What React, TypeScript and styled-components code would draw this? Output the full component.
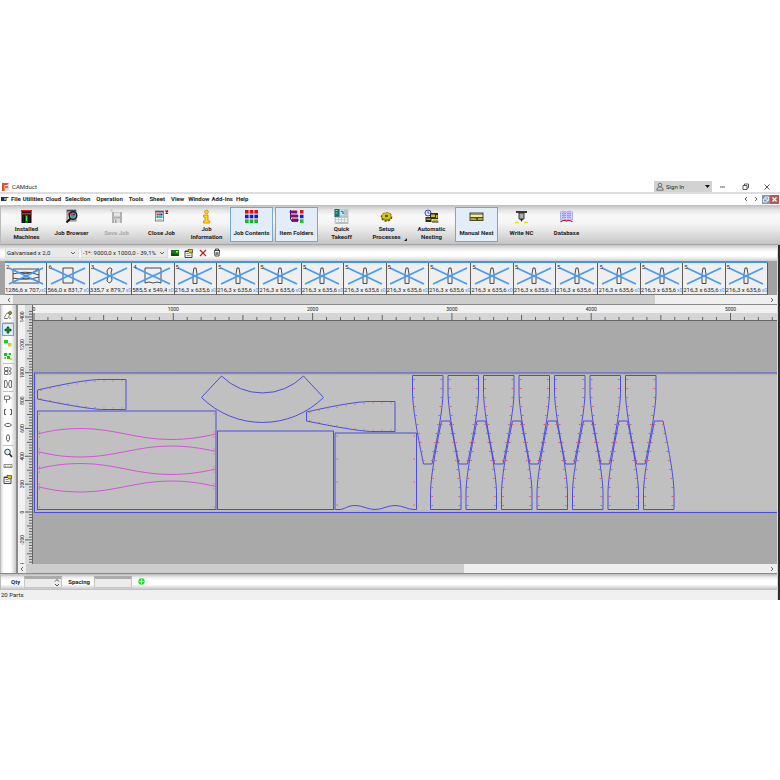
import React from "react";
import styled, { createGlobalStyle } from "styled-components";

const ink = "#262626";
const blue = "#4c4ce0";

const GlobalStyle = createGlobalStyle`
  * { box-sizing: border-box; }
  body { margin: 0; background: #fff; }
  button, select, input { font: inherit; color: inherit; margin: 0; }
  svg { display: block; flex: none; }
`;

const Page = styled.div`
  min-height: 100vh;
  display: flex;
  flex-direction: column;
  justify-content: center;
  background: #fff;
  color: ${ink};
  font-family: Roboto, "Open Sans", sans-serif;
  font-size: 6px;
  line-height: 8px;
`;

const Window = styled.div`
  display: flex;
  flex-direction: column;
`;

const TitleBar = styled.header`
  height: 12px;
  display: flex;
  align-items: center;
  padding: 1px 8px 0 2px;
  gap: 3px;
`;

const Title = styled.h1`
  margin: 0;
  flex: 1;
  font-size: 6px;
  font-weight: 400;
  line-height: 10px;
`;

const SignIn = styled.button`
  width: 58px;
  height: 11px;
  display: flex;
  align-items: center;
  gap: 2px;
  padding: 0 2px;
  border: 0;
  background: #d2d2d2;
`;

const Grow = styled.span`
  flex: 1;
  text-align: left;
`;

const WindowButtons = styled.div`
  display: flex;
  margin-left: 3px;
  gap: 12px;
`;

const BareButton = styled.button<{ $w?: number }>`
  width: ${(p) => p.$w ?? 10}px;
  height: 10px;
  padding: 0;
  border: 0;
  background: none;
  display: flex;
  align-items: center;
  justify-content: center;
`;

const MenuBar = styled.nav`
  height: 13px;
  display: flex;
  align-items: center;
  border-top: 2px solid #dedede;
  padding: 0 1px 1px;
  font-weight: 700;
  color: #222;
`;

const MenuButton = styled.button<{ $gap: number }>`
  padding: 0;
  border: 0;
  background: none;
  line-height: 10px;
  margin-left: ${(p) => p.$gap}px;
  white-space: nowrap;
`;

const MenuTools = styled.div`
  display: flex;
  margin-left: auto;
  align-items: center;
`;

const ToolBar = styled.div`
  height: 40px;
  display: flex;
  align-items: center;
  gap: 2px;
  padding-left: 4px;
  border-left: 1px solid #bbb;
  border-bottom: 1px solid #a6a6a6;
  background: linear-gradient(#bdbdbd, #e2e2e2 12%, #f8f8f8 25%, #f6f6f6 45%, #e2e2e2 70%, #c4c4c4);
`;

const ToolButton = styled.button<{ $on?: boolean; $off?: boolean }>`
  width: 43px;
  height: 35px;
  padding: 1px 0 0;
  display: flex;
  flex-direction: column;
  align-items: center;
  border: 1px solid ${(p) => (p.$on ? "#78a6cc" : "transparent")};
  background: ${(p) => (p.$on ? "#e2edf8" : "none")};
  color: ${(p) => (p.$off ? "#a8a8a8" : "#1c1c1c")};
  font-weight: 700;
  position: relative;
`;

const ToolLabel = styled.span`
  flex: 1;
  display: flex;
  align-items: center;
  text-align: center;
  white-space: pre;
`;

const Corner = styled.svg`
  position: absolute;
  right: 0;
  bottom: 0;
`;

const Lower = styled.div`
  display: flex;
  border-right: 2px solid #2c2c2c;
`;

const LowerMain = styled.main`
  flex: 1;
  min-width: 0;
  display: flex;
  flex-direction: column;
  border-right: 1px solid #d8d8d8;
`;

const OptionBar = styled.div`
  height: 16px;
  display: flex;
  align-items: center;
  gap: 2px;
  padding: 0 5px 1px;
  background: linear-gradient(#c2c2c2, #efefef 25%, #fff 45%, #fff 70%, #cfcfcf);
`;

const Combo = styled.label<{ $w: number }>`
  width: ${(p) => p.$w}px;
  height: 11px;
  display: flex;
  align-items: center;
  background: #e9e9e9;
  border: 1px solid #dcdcdc;
  padding-right: 2px;
`;

const ComboSelect = styled.select`
  flex: 1;
  min-width: 0;
  height: 8px;
  padding: 0 0 0 1px;
  border: 0;
  background: none;
  appearance: none;
  line-height: 8px;
`;

const OptionIcons = styled.div`
  display: flex;
  gap: 4px;
`;

const Strip = styled.div`
  background: #a2a2a2;
  padding: 0 9px 0 5px;
`;

const StripGrid = styled.ul`
  list-style: none;
  margin: 0;
  padding: 0;
  display: grid;
  grid-template-columns: repeat(18, minmax(0, 1fr));
  border-top: 2px solid #3c94f4;
`;

const Thumb = styled.li`
  height: 32px;
  background: #efefef;
  border-right: 1px solid #5c5c5c;
  border-bottom: 1px solid #777;
  display: flex;
  flex-direction: column;
  align-items: center;
  position: relative;
`;

const ThumbCount = styled.span`
  position: absolute;
  left: 1px;
  top: 0;
`;

const ThumbSize = styled.span`
  display: flex;
  width: 100%;
  justify-content: space-between;
  white-space: nowrap;
`;

const SizeText = styled.span`
  min-width: 0;
  overflow: hidden;
`;

const Mult = styled.span`
  color: #3f98f6;
  font-size: 5px;
`;

const ScrollBar = styled.div<{ $h: number; $pad: number }>`
  height: ${(p) => p.$h}px;
  display: flex;
  align-items: center;
  gap: 1px;
  background: #efefef;
  padding: 0 2px 0 ${(p) => p.$pad}px;
`;

const ScrollTrack = styled.div`
  flex: 1;
  height: 100%;
`;

const ScrollThumb = styled.div<{ $size: number }>`
  width: ${(p) => p.$size}%;
  height: 100%;
  background: #cdcdcd;
`;

const Work = styled.div`
  display: flex;
  border-top: 1px solid #8a8a8a;
  border-bottom: 1px solid #8a8a8a;
`;

const SideBar = styled.div`
  width: 18px;
  display: flex;
  flex-direction: column;
  align-items: center;
  padding: 3px 2px 0 1px;
  border-left: 1px solid #bbb;
  border-right: 2px solid #8c8c8c;
  background: linear-gradient(90deg, #dcdcdc, #fff 20%, #fff 65%, #c8c8c8);
`;

const SideButton = styled.button<{ $on?: boolean }>`
  width: 12px;
  height: 13px;
  padding: 0;
  display: flex;
  align-items: center;
  justify-content: center;
  border: 1px solid ${(p) => (p.$on ? "#6fa3d2" : "transparent")};
  background: ${(p) => (p.$on ? "#dcebf8" : "none")};
`;

const SideRule = styled.div`
  width: 11px;
  height: 2px;
  border-bottom: 1px solid #c4c4c4;
`;

const Board = styled.div`
  flex: 1;
  min-width: 0;
  display: flex;
  flex-direction: column;
`;

const BoardMain = styled.div`
  display: flex;
  min-width: 0;
`;

const RulerSvg = styled.svg`
  font-size: 5px;
`;

const PlanColumn = styled.div`
  flex: 1;
  min-width: 0;
  overflow: hidden;
`;

const BottomBar = styled.form`
  height: 16px;
  display: flex;
  align-items: center;
  padding: 0 0 1px 10px;
  font-weight: 700;
  border-left: 1px solid #bbb;
  background: linear-gradient(#b8b8b8, #ececec 20%, #fff 40%, #fff 65%, #bcbcbc);
`;

const FieldLabel = styled.label`
  display: flex;
  align-items: center;
  gap: 4px;
  margin-right: 6px;
`;

const Field = styled.span`
  display: flex;
  align-items: center;
  width: 38px;
  height: 12px;
  border: 1px solid #c6c6c6;
  border-top: 3px solid #acacac;
  background: #ececec;
`;

const FieldInput = styled.input`
  flex: 1;
  min-width: 0;
  height: 8px;
  padding: 0;
  border: 0;
  background: none;
`;

const Status = styled.footer`
  height: 10px;
  padding-left: 1px;
  background: #f0f0f0;
  line-height: 10px;
`;

const Chevron = ({ dir }: { dir: "down" | "left" | "right" }) => {
  const d = { down: "M1 2l2 2 2-2", left: "M4 1L2 3l2 2", right: "M2 1l2 2-2 2" }[dir];
  return (
    <svg width="6" height="6" aria-hidden="true">
      <path d={d} fill="none" stroke="#555" strokeWidth=".9" />
    </svg>
  );
};

const iconBox = { width: 15, height: 15, viewBox: "0 0 15 15", "aria-hidden": true } as const;

const MachinesIcon = () => (
  <svg {...iconBox}>
    <rect x="2.500" y="1" width="10" height="13" fill="#111" />
    <rect x="2" y="1" width="11" height="1.500" fill="#d01818" />
    <rect x="2" y="4" width="11" height="1.500" fill="#e02020" />
    <rect x="6" y="6" width="3" height="8" fill="#0a6b16" />
    <rect x="7" y="7" width="1.200" height="5" fill="#35f045" />
    <path d="M4.500 7v6M10.500 7v6" stroke="#5a1010" strokeWidth=".8" />
  </svg>
);

const BrowserIcon = () => (
  <svg {...iconBox}>
    <rect x="3" y="1" width="9" height="11" fill="#d0d0d8" stroke="#555" strokeWidth=".7" />
    <rect x="3" y="1" width="9" height="1.500" fill="#445" />
    <path d="M4 3.500h2v2H4z" fill="#d33" />
    <circle cx="9" cy="6.500" r="3.800" fill="#7ea6b4" stroke="#16161c" strokeWidth="1.400" />
    <path d="M7 4.500h2v2H7z" fill="#c02a60" />
    <path d="M9 4.500h2v2H9z" fill="#2343cc" />
    <path d="M7.500 7h3v1.500h-3z" fill="#29b04a" />
    <path d="M6.500 9.500L2.500 13.500" stroke="#111" strokeWidth="2" />
  </svg>
);

const SaveIcon = () => (
  <svg {...iconBox}>
    <path d="M3 3h10v11H3z" fill="#b0b0b0" />
    <path d="M5 3.500h6v4H5z" fill="#e4e4e4" />
    <path d="M5 9.500h6V14H5z" fill="#dcdcdc" />
    <path d="M6 10.500h1.500V14H6z" fill="#a4a4a4" />
    <path d="M1 1.500h3M2.500 0v3" stroke="#c4c4c4" strokeWidth=".7" />
  </svg>
);

const CloseJobIcon = () => (
  <svg {...iconBox}>
    <rect x="1.500" y="2" width="8" height="10" fill="#f4f4f4" stroke="#6a6a72" strokeWidth=".8" />
    <rect x="1.500" y="2" width="8" height="1.500" fill="#556" />
    <path d="M2.500 4.500h2v2h-2z" fill="#d22" />
    <path d="M4.500 4.500h2v2h-2z" fill="#a2c" />
    <path d="M6.500 4.500h2v2h-2z" fill="#22b" />
    <path d="M2.500 7h2v2h-2z" fill="#2a4" />
    <path d="M4.500 7h4v2h-4z" fill="#2ac0a0" />
    <path d="M3 10.500h5" stroke="#999" strokeWidth=".6" />
    <path d="M11.500 1.500l2.500 3M14 1.500l-2.500 3" stroke="#8c1414" strokeWidth="1.200" />
  </svg>
);

const InfoIcon = () => (
  <svg {...iconBox}>
    <circle cx="7.500" cy="3" r="1.800" fill="#ffe100" stroke="#e07a10" strokeWidth=".8" />
    <path d="M4.500 6H9v6h1.800v2H4.500v-2H6V8H4.500z" fill="#ffe100" stroke="#e07a10" strokeWidth=".8" />
  </svg>
);

const ContentsIcon = () => (
  <svg {...iconBox}>
    {["#d81212", "#1818c8", "#14b81c"].map((fill, r) =>
      [0, 1, 2].map((c) => <rect key={`${r}${c}`} x={1 + c * 4.7} y={1 + r * 4.7} width="3.600" height="3.600" fill={fill} />)
    )}
  </svg>
);

const FoldersIcon = () => (
  <svg {...iconBox}>
    <path d="M1 1.500h7v3H1zM2 5.500h7v3H2zM3 9.500h6v3.500H3z" fill="#b01050" />
    <path d="M.5 3h8M1 7h8.500M2 11h8" stroke="#3216a0" strokeWidth="1.200" />
    <path d="M1.500 1v9l2 3" stroke="#501880" fill="none" />
    <rect x="11" y="1" width="3.500" height="3.500" fill="#e01414" />
    <rect x="11" y="5.700" width="3.500" height="3.500" fill="#1c1cd0" />
    <rect x="11" y="10.400" width="3.500" height="3.500" fill="#16c01e" />
  </svg>
);

const TakeoffIcon = () => (
  <svg {...iconBox}>
    <path d="M0.500 0h14v15h-14z" fill="#c6cccc" />
    <path d="M0.500 0h5v8h-5z" fill="#1d6a70" />
    <path d="M1.500 1.500h2M1.500 4h2" stroke="#7fe0b0" />
    <path d="M6 1h4v5H6z" fill="#bfe6fa" />
    <path d="M7 2l2 1v2" stroke="#1474e0" strokeWidth="1.300" fill="none" />
    <path d="M11 1v5M13 1v5" stroke="#9aa" strokeWidth=".7" />
    <path d="M2 9.500h12M2 12h12" stroke="#fff" strokeWidth="1.400" strokeDasharray="2 1" />
    <path d="M2 8h12M2 14h12" stroke="#98a4a4" strokeWidth=".6" />
  </svg>
);

const GearIcon = () => (
  <svg {...iconBox}>
    <ellipse cx="7.500" cy="8" rx="5" ry="4" fill="#a99a14" stroke="#5a5008" strokeWidth="1.600" strokeDasharray="2 1.400" />
    <ellipse cx="7.500" cy="7" rx="4.500" ry="3.200" fill="#d8c81e" stroke="#8a7e10" strokeWidth=".5" />
    <ellipse cx="7.500" cy="7" rx="1.600" ry="1.200" fill="#5d540a" />
  </svg>
);

const NestIcon = () => (
  <svg {...iconBox}>
    <circle cx="4" cy="4" r="3" fill="#dfe4ff" stroke="#3a44b8" strokeWidth="1" />
    <path d="M4 2v2h1.500" stroke="#2b36a8" strokeWidth=".7" fill="none" />
    <path d="M6 4h8v6H6z" fill="#35310f" />
    <path d="M7 5.500h4v2.500H7zM12 6h1.500v3H12z" fill="#cbbd2c" />
    <path d="M1.500 8h6v5h-6z" fill="#2b280e" />
    <path d="M2.500 9.500h4V11h-4zM8.500 10.500H14v2H8.500z" fill="#b9aa20" />
    <path d="M8 13h6.500" stroke="#222" />
  </svg>
);

const ManualIcon = () => (
  <svg {...iconBox}>
    <path d="M.5 3.500h14v8.500H.5z" fill="#4a4836" />
    <path d="M1.500 5.500h12V8h-12z" fill="#f0eca8" />
    <path d="M1.500 9h5l1.500 2h-6.500zM9 9h4.500v2H9z" fill="#b3a52a" />
    <path d="M2 4.500h11" stroke="#99a" strokeWidth=".7" />
  </svg>
);

const WriteIcon = () => (
  <svg {...iconBox}>
    <path d="M2 2h11v2H2z" fill="#38383e" />
    <path d="M5 4h5v6H5z" fill="#aaaab0" stroke="#26262a" strokeWidth=".9" />
    <path d="M6 10h3l-1.500 3z" fill="#222" />
    <path d="M1 13.500h4M10 13.500h4" stroke="#e6dc14" strokeWidth="1.600" />
  </svg>
);

const DatabaseIcon = () => (
  <svg {...iconBox}>
    <path d="M1.500 3q3-2 6 0q3-2 6 0v8q-3-2-6 0q-3-2-6 0z" fill="#d4d2ff" stroke="#9a94ee" strokeWidth=".7" />
    <path d="M3 4.500q2-1 4 0M3 6.500q2-1 4 0M3 8.500q2-1 4 0M8 4.500q2-1 4 0M8 6.500q2-1 4 0M8 8.500q2-1 4 0" stroke="#7a72f0" strokeWidth=".8" fill="none" />
    <path d="M1.500 13q3-2.500 6-1q3-1.500 6 1" stroke="#a02a36" strokeWidth="1.200" fill="none" />
  </svg>
);

const tools: { label: string; icon: React.ReactNode; on?: boolean; off?: boolean; more?: boolean }[] = [
  { label: "Installed\nMachines", icon: <MachinesIcon /> },
  { label: "Job Browser", icon: <BrowserIcon /> },
  { label: "Save Job", icon: <SaveIcon />, off: true },
  { label: "Close Job", icon: <CloseJobIcon /> },
  { label: "Job\nInformation", icon: <InfoIcon /> },
  { label: "Job Contents", icon: <ContentsIcon />, on: true },
  { label: "Item Folders", icon: <FoldersIcon />, on: true },
  { label: "Quick\nTakeoff", icon: <TakeoffIcon /> },
  { label: "Setup\nProcesses", icon: <GearIcon />, more: true },
  { label: "Automatic\nNesting", icon: <NestIcon /> },
  { label: "Manual Nest", icon: <ManualIcon />, on: true },
  { label: "Write NC", icon: <WriteIcon /> },
  { label: "Database", icon: <DatabaseIcon /> },
];

const menus: [string, number][] = [
  ["File", 2], ["Utilities", 2], ["Cloud", 2], ["Selection", 4], ["Operation", 6], ["Tools", 6],
  ["Sheet", 6], ["View", 6], ["Window", 4], ["Add-Ins", 2], ["Help", 3],
];

const Properties = () => (
  <svg width="10" height="10" viewBox="0 0 10 10" aria-hidden="true">
    <path d="M1 3h7v6.500H1z" fill="#f6f6f6" stroke="#333" strokeWidth=".9" />
    <path d="M1 3.500h7" stroke="#333" strokeWidth="1" />
    <path d="M2.500 5.500h3M2.500 7.500h4" stroke="#666" strokeWidth=".7" />
    <path d="M4 1.500h4.500v3L6 5 4.500 3.500z" fill="#d6c81e" stroke="#4a440c" strokeWidth=".7" />
  </svg>
);

const sideIcons: { name: string; art: React.ReactNode; on?: boolean; rule?: boolean }[] = [
  {
    name: "Edit part", rule: true,
    art: <><path d="M1 8l3-5 3 1-2 4M1 8.500h4" fill="none" stroke="#777" strokeWidth=".9" /><path d="M5 2.500L7.500 1 9 3 7 5z" fill="#9c8a18" stroke="#333" strokeWidth=".5" /><path d="M6 8h2" stroke="#777" /></>,
  },
  {
    name: "Move part", on: true,
    art: <><path d="M5 2v6M2 5h6" stroke="#0c6a20" strokeWidth="1.400" /><path d="M5 1l2 2.500H3zM5 9l2-2.500H3zM1 5l2.500-2v4zM9 5L6.500 3v4z" fill="#0a5a1a" /></>,
  },
  { name: "Copy part", art: <><path d="M1 2h4v3.500H1z" fill="#12d41e" /><path d="M5 5h3.500v3.500H5z" fill="#d9d013" /></> },
  {
    name: "Array parts", rule: true,
    art: <><path d="M1 2h3v3H1zM4 5h3v3H4zM6 2h2v2H6z" fill="#12c81e" /><path d="M7 7h2v2H7z" fill="#d9d013" /><path d="M1 7h2M4.500 3h1" stroke="#0a7a14" /></>,
  },
  { name: "Flip vertical", art: <path d="M1.500 1.500h3.500v3H1.500zM1.500 5.500h3.500v3H1.500zM6 1.500q3 0 2 2.500L6 5l2 1q1 2.500-2 2.500" fill="none" stroke="#666" strokeWidth=".9" /> },
  { name: "Flip horizontal", rule: true, art: <path d="M1.500 1.500h2l1 3.500-1 3.500h-2zM8.500 1.500h-2l-1 3.500 1 3.500h2z" fill="none" stroke="#666" strokeWidth=".9" /> },
  { name: "Pin part", art: <path d="M1.500 2h5v3.500h-5zM6.500 4h2M3.500 5.500V9" fill="none" stroke="#666" strokeWidth=".9" /> },
  { name: "Select region", art: <path d="M3 2.500H1.500v5H3M7 2.500h1.500v5H7" fill="none" stroke="#555" strokeWidth="1" /> },
  { name: "Stretch width", art: <><rect x="2.500" y="3.500" width="5" height="3" rx="1" fill="none" stroke="#666" /><path d="M1 5h1M8 5h1" stroke="#666" /></> },
  { name: "Stretch height", rule: true, art: <><rect x="3.500" y="2.500" width="3" height="5" rx="1" fill="none" stroke="#666" /><path d="M5 1v1.500M5 7.500V9" stroke="#666" /></> },
  { name: "Zoom", art: <><circle cx="4.500" cy="4" r="2.800" fill="#dff3f3" stroke="#2a4048" strokeWidth="1" /><path d="M6.500 6L9 9" stroke="#223" strokeWidth="1.500" /></> },
  { name: "Measure", art: <><path d="M1 3.500h8v3H1z" fill="#e8e8e8" stroke="#777" strokeWidth=".8" /><path d="M2.500 5v1.500M5 5v1.500M7.500 5v1.500" stroke="#666" strokeWidth=".6" /></> },
];

const shapes = {
  sheet: "M6 3h26v14H6zM6 4Q19 12 32 3M6 8Q19 4 32 9M6 12Q19 15 32 11M6 16Q19 8 32 16",
  square: "M14 2h10v15H14z",
  bend: "M16 5q2-5 5-2l-1 4 1 7q-2 5-5 1l1-5z",
  wave: "M11 2h16v15q-4-2-8 0-4-2-8 0z",
  cone: "M17 17.500V8l1-6h2l1 6v9.500z",
};

const thumbs: [string, string, keyof typeof shapes][] = [
  ["2", "1286,6 x 707,4", "sheet"],
  ["6", "566,0 x 831,7", "square"],
  ["3", "335,7 x 879,7", "bend"],
  ["4", "585,5 x 549,4", "wave"],
  ...Array.from({ length: 14 }, () => ["5", "216,3 x 635,6", "cone"] as [string, string, keyof typeof shapes]),
];

const SCALE = 0.1393;
const ORIGIN_X = 1;
const ORIGIN_Y = 191;
const range = (a: number, b: number, step: number) => Array.from({ length: Math.floor((b - a) / step) + 1 }, (_, i) => a + i * step);

const TopRuler = () => (
  <RulerSvg width="100%" height="16" aria-label="Horizontal ruler">
    <rect width="100%" height="8" fill="#f1f1f1" />
    <rect y="8" width="100%" height="7" fill="#d5d5d5" />
    <path d="M0 15.500H4000" stroke="#666" />
    {range(0, 20000, 100).map((mm) => {
      const x = ORIGIN_X + mm * SCALE;
      return <path key={mm} d={`M${x} 15V${mm % 1000 === 0 ? 8 : mm % 500 === 0 ? 10 : 12}`} stroke="#555" strokeWidth=".9" />;
    })}
    {range(0, 5000, 1000).map((mm) => (
      <text key={mm} x={ORIGIN_X + mm * SCALE} y="6" textAnchor="middle" fill="#222">{mm}</text>
    ))}
  </RulerSvg>
);

const SideRuler = () => (
  <RulerSvg width="15" height="259" aria-label="Vertical ruler">
    <rect width="7" height="259" fill="#f1f1f1" />
    <rect x="7" width="7" height="259" fill="#d9d9d9" />
    <path d="M14.500 0V259" stroke="#666" />
    {range(-360, 1440, 20).map((mm) => {
      const y = 16 + ORIGIN_Y - mm * SCALE;
      return <path key={mm} d={`M14 ${y}H${mm % 200 === 0 ? 7 : mm % 100 === 0 ? 9 : 11}`} stroke="#555" strokeWidth=".9" />;
    })}
    {range(-400, 1400, 200).map((mm) => (
      <text key={mm} transform={`translate(6 ${16 + ORIGIN_Y - mm * SCALE}) rotate(-90)`} textAnchor="middle" fill="#222">{mm}</text>
    ))}
  </RulerSvg>
);

const Taper = ({ x, y }: { x: number; y: number }) => (
  <g transform={`translate(${x} ${y})`}>
    <path d="M0 10.500Q46 0 64 0H88.500V30H64Q46 29 0 19.500z" />
    <path d="M3 11h1M12 9h1M21 7.500h1M30 6h1M39 4.500h1M48 3h1M57 2h1M66 1.500h1M75 1.500h1M84 1.500h1M3 19h1M12 21h1M21 22.500h1M30 24h1M39 25.500h1M48 27h1M57 28h1M66 28.500h1M75 28.500h1M84 28.500h1" stroke="#e25b5b" />
  </g>
);

const coneMarks = (() => {
  const inset = [0, 0, 0, 1, 2, 3.5, 5, 6.5, 8, 9.5];
  return inset.map((v, i) => `M${v + 1} ${4 + i * 9}h1.500M${28 - v} ${4 + i * 9}h1.500`).join("");
})();

const Cone = ({ x, y, up }: { x: number; y: number; up?: boolean }) => (
  <g transform={`translate(${x} ${y}) ${up ? "scale(1 -1)" : ""}`}>
    <path d="M0 0H30.500V18Q30 38 19.500 88.500H11Q.5 38 0 18z" />
    <path d={coneMarks} stroke="#e25b5b" />
  </g>
);

const wave = (y: number, a: number, b: number) =>
  `M4.500 ${y}C20 ${y + a * 0.75} 34 ${y + a} 49 ${y + a}C80 ${y + a} 105 ${y + b} 137 ${y + b}C155 ${y + b} 168 ${y + b * 0.6} 183 ${y}`;

const Plan = () => (
  <svg width="100%" height="243" role="img" aria-label="Nested parts on sheet">
    <rect width="100%" height="243" fill="#a9a9a9" />
    <rect x="1.500" y="52" width="4000" height="139.500" fill="#c0c0c0" stroke={blue} />
    <rect x="3" y="53.500" width="4000" height="136.500" fill="none" stroke="#aaa98c" strokeWidth=".8" strokeDasharray="1.500 1" />
    <g fill="none" stroke={blue} strokeWidth="1">
      <Taper x={4.5} y={58.5} />
      <Taper x={273.5} y={80.5} />
      <path d="M188.500 55A58 58 0 0 0 270.500 55L290.500 76.500A87 87 0 0 1 168.500 76.500z" />
      <rect x="4.500" y="90" width="178.500" height="98.500" />
      <rect x="184.500" y="110" width="116" height="78.500" />
      <path d="M302 188.500V112H383.500V188.500H381C374 188.500 370 184.500 362 184.500S350 188.500 342 188.500S330 184.500 322 184.500S312 188.500 306 188.500z" />
      {range(0, 6, 1).map((i) => <Cone key={i} x={379.5 + i * 35.5} y={54.5} />)}
      {range(0, 6, 1).map((i) => <Cone key={i} x={397.5 + i * 35.5} y={188.5} up />)}
    </g>
    <g fill="none" stroke="#db50dd" strokeWidth="1">
      <path d={wave(113, -5.5, 5.500)} />
      <path d={wave(130.5, 5.5, -5.500)} />
      <path d={wave(148, -5.5, 5.500)} />
      <path d={wave(165.5, 5.5, -5.500)} />
    </g>
    <g stroke="#e25b5b">
      {[93, 111, 116, 128, 133, 146, 151, 163, 168, 186].map((y) => <path key={y} d={`M6 ${y}h1M180.500 ${y}h1`} />)}
      {[115, 138, 161, 184].map((y) => <path key={y} d={`M303.500 ${y}h1.500M380.500 ${y}h1.500`} />)}
    </g>
  </svg>
);

export default function App() {
  return (
    <>
      <GlobalStyle />
      <Page>
        <Window>
          <TitleBar>
            <svg width="7" height="8" aria-hidden="true">
              <rect width="7" height="8" fill="#f7d9cf" />
              <path d="M0 0h7L5 2H2.500v6H0z" fill="#d9532c" />
              <path d="M3 4h3" stroke="#c43c1a" strokeWidth="1.300" />
            </svg>
            <Title>CAMduct</Title>
            <SignIn>
              <svg width="8" height="9" aria-hidden="true">
                <circle cx="4" cy="3" r="1.800" fill="none" stroke="#555" strokeWidth=".8" />
                <path d="M.8 8.200q0-2.700 2.200-3.200h2q2.200.5 2.200 3.200z" fill="none" stroke="#555" strokeWidth=".8" />
              </svg>
              <Grow>Sign In</Grow>
              <svg width="5" height="4" aria-hidden="true"><path d="M0 0h5L2.500 3z" fill="#111" /></svg>
            </SignIn>
            <WindowButtons>
              <BareButton aria-label="Minimize"><svg width="6" height="6"><path d="M0 3h5" stroke="#333" strokeWidth=".8" /></svg></BareButton>
              <BareButton aria-label="Restore"><svg width="7" height="7"><path d="M1 2.500h4v4H1zM2.500 2.500V1h4v4H5" fill="none" stroke="#333" strokeWidth=".8" /></svg></BareButton>
              <BareButton aria-label="Close"><svg width="6" height="6"><path d="M.5.5l5 5M5.500.5l-5 5" stroke="#333" strokeWidth=".8" /></svg></BareButton>
            </WindowButtons>
          </TitleBar>

          <MenuBar>
            <svg width="8" height="6" aria-hidden="true">
              <path d="M0 1h3v4H0z" fill="#1a2a66" />
              <path d="M3 1.500h4.500M3 3h3M3 4.500h2.500" stroke="#222" strokeWidth=".9" />
            </svg>
            {menus.map(([m, gap]) => <MenuButton key={m} $gap={gap}>{m}</MenuButton>)}
            <MenuTools>
              <BareButton aria-label="Previous"><Chevron dir="left" /></BareButton>
              <BareButton aria-label="Next"><Chevron dir="right" /></BareButton>
              <BareButton aria-label="Restore sheet" $w={9}>
                <svg width="8" height="9"><path d="M0 0h8v9H0z" fill="#8298bb" /><path d="M1.500 4h3.500v3H1.500zM3 4V2h3.500v3.500H5" fill="none" stroke="#fff" strokeWidth=".8" /></svg>
              </BareButton>
              <BareButton aria-label="Close sheet" $w={9}>
                <svg width="9" height="9"><path d="M0 0h9v9H0z" fill="#b35a58" /><path d="M2.500 2.500l4 4M6.500 2.500l-4 4" stroke="#fff" strokeWidth="1.200" /></svg>
              </BareButton>
            </MenuTools>
          </MenuBar>

          <ToolBar>
            {tools.map((t) => (
              <ToolButton key={t.label} $on={t.on} $off={t.off}>
                {t.icon}
                <ToolLabel>{t.label}</ToolLabel>
                {t.more && <Corner width="3" height="3"><path d="M3 0v3H0z" fill="#222" /></Corner>}
              </ToolButton>
            ))}
          </ToolBar>

          <Lower>
            <LowerMain>
              <OptionBar>
                <Combo $w={74}>
                  <ComboSelect aria-label="Material"><option>Galvanised x 2,0</option></ComboSelect>
                  <Chevron dir="down" />
                </Combo>
                <Combo $w={87}>
                  <ComboSelect aria-label="Sheet"><option>-1*: 9000,0 x 1000,0 - 39,1%</option></ComboSelect>
                  <Chevron dir="down" />
                </Combo>
                <OptionIcons>
                  <BareButton aria-label="Show sheet"><svg width="8" height="6"><path d="M0 0h8v6H0z" fill="#117a1c" /><path d="M0 6V3l8 2v1z" fill="#064d0e" /><path d="M5 1h2v1.500H5z" fill="#e8e02a" /></svg></BareButton>
                  <BareButton aria-label="Sheet properties"><Properties /></BareButton>
                  <BareButton aria-label="Remove"><svg width="8" height="8"><path d="M1 1l6 6M7 1L1 7" stroke="#b81c1c" strokeWidth="1.200" /></svg></BareButton>
                  <BareButton aria-label="Delete sheet"><svg width="8" height="9"><path d="M1 2.500h6M2.500 2V1h3v1M1.500 3l.5 5h4l.5-5M3.200 4v3M4.800 4v3" fill="none" stroke="#333" strokeWidth=".9" /></svg></BareButton>
                </OptionIcons>
              </OptionBar>

              <Strip>
                <StripGrid>
                  {thumbs.map(([n, size, shape], i) => (
                    <Thumb key={i}>
                      <ThumbCount>{n}</ThumbCount>
                      <svg width="38" height="23" aria-hidden="true">
                        <g transform="translate(0 3)">
                          <path d={shapes[shape]} fill="none" stroke="#3a3a3a" strokeWidth=".9" />
                          <path d="M2 2l34 16M36 2L2 18" stroke="#469cf5" strokeWidth="1.800" />
                        </g>
                      </svg>
                      <ThumbSize><SizeText>{size}</SizeText><Mult>x0</Mult></ThumbSize>
                    </Thumb>
                  ))}
                </StripGrid>
              </Strip>
              <ScrollBar $h={9} $pad={6}>
                <Chevron dir="left" />
                <ScrollTrack><ScrollThumb $size={85} /></ScrollTrack>
                <Chevron dir="right" />
              </ScrollBar>

              <Work>
                <SideBar>
                  {sideIcons.map((s) => (
                    <React.Fragment key={s.name}>
                      <SideButton aria-label={s.name} $on={s.on}><svg width="10" height="10">{s.art}</svg></SideButton>
                      {s.rule && <SideRule />}
                    </React.Fragment>
                  ))}
                  <SideButton aria-label="Properties"><Properties /></SideButton>
                </SideBar>
                <Board>
                  <BoardMain>
                    <SideRuler />
                    <PlanColumn>
                      <TopRuler />
                      <Plan />
                    </PlanColumn>
                  </BoardMain>
                  <ScrollBar $h={9} $pad={1}>
                    <Chevron dir="left" />
                    <ScrollTrack><ScrollThumb $size={59} /></ScrollTrack>
                    <Chevron dir="right" />
                  </ScrollBar>
                </Board>
              </Work>

              <BottomBar>
                <FieldLabel>
                  Qty
                  <Field>
                    <FieldInput />
                    <svg width="8" height="9" aria-hidden="true"><path d="M2 3.500L4 1.500l2 2M2 6l2 2 2-2" fill="none" stroke="#444" strokeWidth=".9" /></svg>
                  </Field>
                </FieldLabel>
                <FieldLabel>
                  Spacing
                  <Field><FieldInput /></Field>
                </FieldLabel>
                <BareButton type="button" aria-label="Add" $w={8}>
                  <svg width="7" height="7"><circle cx="3.500" cy="3.500" r="3.200" fill="#1fe028" /><path d="M3.500 1.500v4M1.500 3.500h4" stroke="#fff" strokeWidth="1.200" /></svg>
                </BareButton>
              </BottomBar>
              <Status>20 Parts</Status>
            </LowerMain>
          </Lower>
        </Window>
      </Page>
    </>
  );
}
